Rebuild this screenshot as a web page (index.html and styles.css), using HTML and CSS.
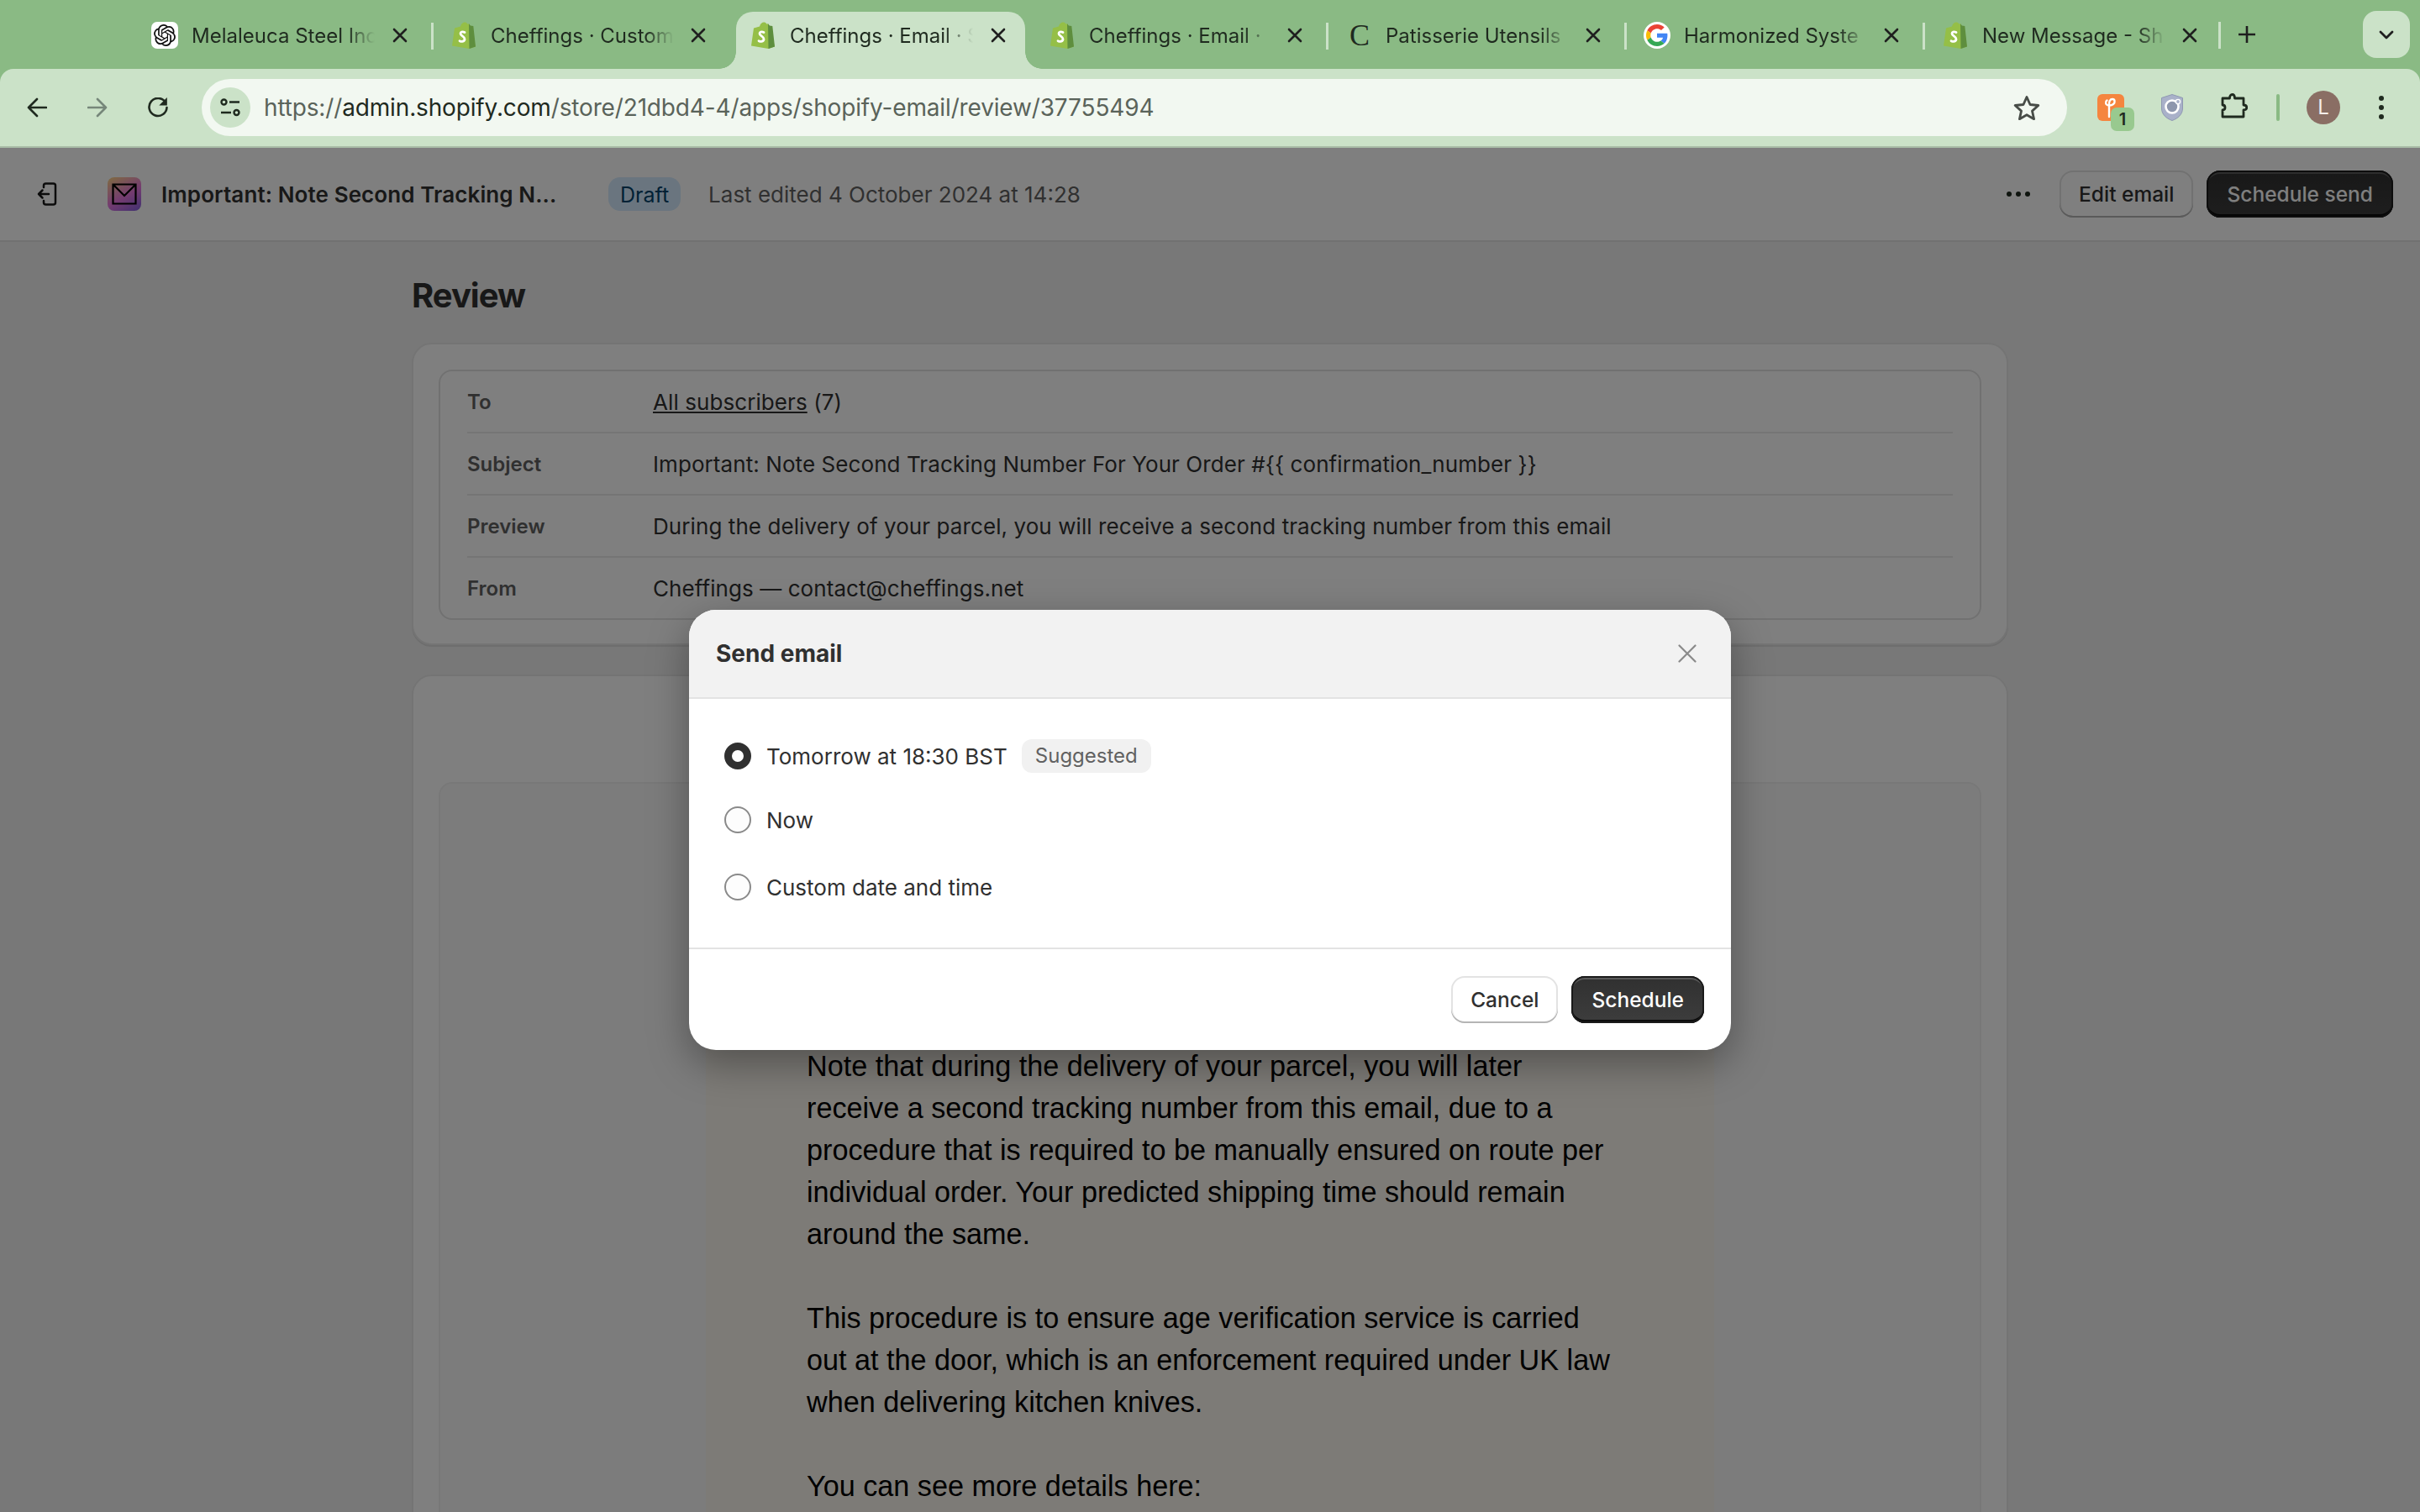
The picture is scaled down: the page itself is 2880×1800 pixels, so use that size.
FILE: index.html
```html
<!DOCTYPE html>
<html lang="en">
<head>
    <meta charset="UTF-8">
    <title>Cheffings · Email · Shopify</title>
    <link rel="stylesheet" href="styles.css">
</head>
<body>

    <!-- hidden defs so the shopify bag is only drawn once -->
    <svg class="defs" width="0" height="0">
        <symbol id="bag" viewBox="0 0 28 32">
            <path fill="#95bf47" d="M3 7.5 10 5.4C11 2 13 .6 15 .6c1.4 0 2.600.6 3.300 1.900l1.700-.3L22 5l6 24.500L20.500 32 0 28.500Z"/>
            <path fill="#5e8e3e" d="M20 2.200 21.800 4.600 25.300 5 28 29.500 20.500 32Z"/>
            <path fill="none" stroke="#fff" stroke-width="2.800" stroke-linecap="round" d="M15 12.500c-3-1.500-5-.2-5 1.600 0 2.600 5 3 5 6.400 0 2.800-3.200 3.600-6 2.200"/>
        </symbol>
        <symbol id="close" viewBox="0 0 18 18">
            <path fill="none" stroke="#1f1f1f" stroke-width="2.600" stroke-linecap="round" d="M2 2l14 14M16 2 2 16"/>
        </symbol>
    </svg>

    <div class="tabstrip">
        <div class="tab">
            <span class="favicon favicon-white">
                <svg width="26" height="26" viewBox="0 0 24 24"><path fill="#111" d="M22.2819 9.8211a5.9847 5.9847 0 0 0-.5157-4.9108 6.0462 6.0462 0 0 0-6.5098-2.9A6.0651 6.0651 0 0 0 4.9807 4.1818a5.9847 5.9847 0 0 0-3.9977 2.9 6.0462 6.0462 0 0 0 .7427 7.0966 5.98 5.98 0 0 0 .511 4.9107 6.051 6.051 0 0 0 6.5146 2.9001A5.9847 5.9847 0 0 0 13.2599 24a6.0557 6.0557 0 0 0 5.7718-4.2058 5.9894 5.9894 0 0 0 3.9977-2.9001 6.0557 6.0557 0 0 0-.7475-7.0729zm-9.022 12.6081a4.4755 4.4755 0 0 1-2.8764-1.0408l.1419-.0804 4.7783-2.7582a.7948.7948 0 0 0 .3927-.6813v-6.7369l2.02 1.1686a.071.071 0 0 1 .038.052v5.5826a4.504 4.504 0 0 1-4.4945 4.4944zm-9.6607-4.1254a4.4708 4.4708 0 0 1-.5346-3.0137l.142.0852 4.783 2.7582a.7712.7712 0 0 0 .7806 0l5.8428-3.3685v2.3324a.0804.0804 0 0 1-.0332.0615L9.74 19.9502a4.4992 4.4992 0 0 1-6.1408-1.6464zM2.3408 7.8956a4.485 4.485 0 0 1 2.3655-1.9728V11.6a.7664.7664 0 0 0 .3879.6765l5.8144 3.3543-2.0201 1.1685a.0757.0757 0 0 1-.071 0l-4.8303-2.7865A4.504 4.504 0 0 1 2.3408 7.872zm16.5963 3.8558L13.1038 8.364 15.1192 7.2a.0757.0757 0 0 1 .071 0l4.8303 2.7913a4.4944 4.4944 0 0 1-.6765 8.1042v-5.6772a.79.79 0 0 0-.407-.667zm2.0107-3.0231l-.142-.0852-4.7735-2.7818a.7759.7759 0 0 0-.7854 0L9.409 9.2297V6.8974a.0662.0662 0 0 1 .0284-.0615l4.8303-2.7866a4.4992 4.4992 0 0 1 6.6802 4.66zM8.3065 12.863l-2.02-1.1638a.0804.0804 0 0 1-.038-.0567V6.0742a4.4992 4.4992 0 0 1 7.3757-3.4537l-.142.0805L8.704 5.459a.7948.7948 0 0 0-.3927.6813zm1.0976-2.3654l2.602-1.4998 2.6069 1.4998v2.9994l-2.5974 1.5-2.6067-1.5Z"/></svg>
            </span>
            <span class="tab-label">Melaleuca Steel Inc</span>
            <svg class="tab-close"><use href="#close"/></svg>
        </div>
        <div class="tab tab-sep">
            <svg class="favicon"><use href="#bag"/></svg>
            <span class="tab-label">Cheffings · Custom</span>
            <svg class="tab-close"><use href="#close"/></svg>
        </div>
        <div class="tab tab-active">
            <svg class="favicon"><use href="#bag"/></svg>
            <span class="tab-label">Cheffings · Email · S</span>
            <svg class="tab-close"><use href="#close"/></svg>
        </div>
        <div class="tab tab-fourth">
            <svg class="favicon"><use href="#bag"/></svg>
            <span class="tab-label">Cheffings · Email ·</span>
            <svg class="tab-close"><use href="#close"/></svg>
        </div>
        <div class="tab tab-sep">
            <span class="favicon favicon-c">C</span>
            <span class="tab-label">Patisserie Utensils</span>
            <svg class="tab-close"><use href="#close"/></svg>
        </div>
        <div class="tab tab-sep tab-google">
            <span class="favicon favicon-white favicon-round">
                <svg width="26" height="26" viewBox="0 0 48 48">
                    <path fill="#EA4335" d="M24 9.500c3.540 0 6.710 1.220 9.210 3.600l6.850-6.850C35.900 2.380 30.470 0 24 0 14.620 0 6.510 5.380 2.560 13.220l7.980 6.190C12.430 13.720 17.740 9.500 24 9.500z"/>
                    <path fill="#4285F4" d="M46.980 24.550c0-1.570-.15-3.090-.38-4.550H24v9.020h12.940c-.58 2.960-2.260 5.480-4.780 7.180l7.730 6c4.510-4.180 7.090-10.360 7.090-17.650z"/>
                    <path fill="#FBBC05" d="M10.530 28.590c-.48-1.450-.76-2.990-.76-4.590s.27-3.140.76-4.590l-7.980-6.190C.92 16.460 0 20.120 0 24c0 3.880.92 7.540 2.560 10.780l7.970-6.190z"/>
                    <path fill="#34A853" d="M24 48c6.480 0 11.930-2.130 15.890-5.810l-7.730-6c-2.150 1.450-4.920 2.300-8.160 2.300-6.260 0-11.570-4.220-13.470-9.910l-7.980 6.190C6.510 42.620 14.620 48 24 48z"/>
                </svg>
            </span>
            <span class="tab-label">Harmonized Syste</span>
            <svg class="tab-close"><use href="#close"/></svg>
        </div>
        <div class="tab tab-sep">
            <svg class="favicon"><use href="#bag"/></svg>
            <span class="tab-label">New Message - Sh</span>
            <svg class="tab-close"><use href="#close"/></svg>
        </div>
        <div class="tab-sep-last"></div>
        <svg class="new-tab" width="20" height="20" viewBox="0 0 20 20"><path fill="none" stroke="#1f1f1f" stroke-width="2.600" d="M10 0v20M0 10h20"/></svg>
        <div class="tab-list">
            <svg width="18" height="11" viewBox="0 0 18 11"><path fill="none" stroke="#1f1f1f" stroke-width="2.800" stroke-linecap="round" stroke-linejoin="round" d="M2 2l7 7 7-7"/></svg>
        </div>
    </div>

    <div class="toolbar">
        <svg class="nav-icon" viewBox="0 0 24 24"><path fill="none" stroke="#1f2a1f" stroke-width="2.600" stroke-linecap="round" stroke-linejoin="round" d="M23 12H2M12 2 2 12l10 10"/></svg>
        <svg class="nav-icon" viewBox="0 0 24 24"><path fill="none" stroke="#76877a" stroke-width="2.600" stroke-linecap="round" stroke-linejoin="round" d="M1 12h21M12 2l10 10-10 10"/></svg>
        <svg class="nav-icon" viewBox="0 0 24 24"><path fill="none" stroke="#1f2a1f" stroke-width="2.600" stroke-linecap="round" d="M21 6A10.500 10.500 0 1 0 22.500 12"/><path fill="#1f2a1f" d="M22.800 0v9.500h-9.500Z"/></svg>

        <div class="omnibox">
            <div class="site-settings">
                <svg width="24" height="22" viewBox="0 0 24 22"><g fill="none" stroke="#1f2a1f" stroke-width="2.400"><circle cx="4.500" cy="4.500" r="3"/><path d="M11 4.500h12M1 17h12"/><circle cx="19.500" cy="17" r="3"/></g></svg>
            </div>
            <div class="url">https://<b>admin.shopify.com</b>/store/21dbd4-4/apps/shopify-email/review/37755494</div>
            <svg width="32" height="30" viewBox="0 0 32 30"><path fill="none" stroke="#474c47" stroke-width="2.800" stroke-linejoin="round" d="M16 2.500l4 9 9.800 1-7.300 6.600 2.100 9.600-8.600-5-8.600 5 2.100-9.600L2.200 12.500l9.800-1Z"/></svg>
        </div>

        <div class="ext ext-orange">
            <svg width="32" height="32" viewBox="0 0 32 32"><path fill="none" stroke="#fff" stroke-width="2.400" stroke-linecap="round" d="M14 27V12c0-3 1-6 4-6s3.500 4 1 6-6.500 2-8 .5-1-4 .5-5"/></svg>
            <span class="ext-badge">1</span>
        </div>
        <svg class="ext-shield" width="26" height="32" viewBox="0 0 26 32">
            <path fill="#a9b1c9" stroke="#8f98b2" d="M13 .5 25.500 4.500V17c0 7-5.500 12-12.500 14.500C6 29 .5 24 .5 17V4.500Z"/>
            <circle cx="13" cy="15" r="7.500" fill="#8e97ad" stroke="#fff" stroke-width="2.600"/>
            <circle cx="20" cy="9" r="2.600" fill="#a9b1c9" stroke="#fff" stroke-width="1.400"/>
        </svg>
        <svg class="ext-puzzle" width="32" height="32" viewBox="0 0 32 32"><path fill="none" stroke="#1f2a1f" stroke-width="2.800" stroke-linejoin="round" d="M2 7h8.500c0-6 6-6 6 0H27v8c5 0 5 6 0 6v8H2v-8c4 0 4-6 0-6Z"/></svg>
        <div class="toolbar-sep"></div>
        <div class="avatar">L</div>
        <div class="kebab"><i></i><i></i><i></i></div>
    </div>

    <div class="viewport">
        <div class="app-header">
            <svg class="exit-icon" width="24" height="28" viewBox="0 0 24 28"><path fill="none" stroke="#181818" stroke-width="2.500" stroke-linecap="round" stroke-linejoin="round" d="M8 6V4a2.500 2.500 0 0 1 2.500-2.500h9A2.500 2.500 0 0 1 22 4v20a2.500 2.500 0 0 1-2.500 2.500h-9A2.500 2.500 0 0 1 8 24v-2M14 14H2M6.500 9.500 2 14l4.500 4.500"/></svg>
            <div class="app-icon">
                <svg width="30" height="26" viewBox="0 0 30 26"><path fill="none" stroke="#000" stroke-width="2.200" d="M1.500 1.500h27v23h-27ZM1.500 1.500 15 15 28.500 1.500"/></svg>
            </div>
            <div class="app-title">Important: Note Second Tracking N...</div>
            <span class="draft">Draft</span>
            <span class="edited">Last edited 4 October 2024 at 14:28</span>
            <div class="dots"><i></i><i></i><i></i></div>
            <button class="btn">Edit email</button>
            <button class="btn btn-dark">Schedule send</button>
        </div>

        <div class="page">
            <h1>Review</h1>

            <div class="card">
                <div class="summary">
                    <div class="summary-row"><span class="summary-label">To</span><span class="summary-value"><a href="#">All subscribers</a> (7)</span></div>
                    <div class="summary-row"><span class="summary-label">Subject</span><span class="summary-value">Important: Note Second Tracking Number For Your Order #{{ confirmation_number }}</span></div>
                    <div class="summary-row"><span class="summary-label">Preview</span><span class="summary-value">During the delivery of your parcel, you will receive a second tracking number from this email</span></div>
                    <div class="summary-row"><span class="summary-label">From</span><span class="summary-value">Cheffings — contact@cheffings.net</span></div>
                </div>
            </div>

            <div class="card card-email">
                <div class="email-frame">
                    <div class="email-body">
                        <p>Note that during the delivery of your parcel, you will later receive a second tracking number from this email, due to a procedure that is required to be manually ensured on route per individual order. Your predicted shipping time should remain around the same.</p>
                        <p>This procedure is to ensure age verification service is carried out at the door, which is an enforcement required under UK law when delivering kitchen knives.</p>
                        <p>You can see more details here:</p>
                    </div>
                </div>
            </div>
        </div>

        <div class="overlay">
            <div class="modal">
                <div class="modal-head">
                    <span>Send email</span>
                    <svg width="22" height="22" viewBox="0 0 22 22"><path fill="none" stroke="#8a8a8a" stroke-width="2.200" stroke-linecap="round" d="M1.500 1.500l19 19M20.500 1.500l-19 19"/></svg>
                </div>
                <div class="modal-body">
                    <div class="radio-row">
                        <span class="radio radio-on"></span>
                        <span>Tomorrow at 18:30 BST</span>
                        <span class="suggested">Suggested</span>
                    </div>
                    <div class="radio-row">
                        <span class="radio"></span>
                        <span>Now</span>
                    </div>
                    <div class="radio-row">
                        <span class="radio"></span>
                        <span>Custom date and time</span>
                    </div>
                </div>
                <div class="modal-foot">
                    <button class="btn btn-white">Cancel</button>
                    <button class="btn btn-dark">Schedule</button>
                </div>
            </div>
        </div>
    </div>

</body>
</html>
```

FILE: styles.css
```css
* {
    box-sizing: border-box;
}
html, body {
    height: 100%;
    margin: 0;
    overflow: hidden;
}
body {
    display: flex;
    flex-direction: column;
    font-family: 'Inter', 'Liberation Sans', sans-serif;
    font-size: 26px;
    color: #303030;
    background-color: #8aba84;
}
.defs {
    position: absolute;
}

/* tab strip */
.tabstrip {
    display: flex;
    align-items: center;
    height: 82px;
    padding-left: 160px;
    flex-shrink: 0;
}
.tab {
    position: relative;
    display: flex;
    align-items: center;
    width: 355px;
    height: 82px;
    padding-left: 23px;
    padding-top: 2px;
    font-size: 24px;
    color: #1f2a1f;
}
.tab:first-child {
    padding-left: 20px;
}
.tab-fourth {
    padding-left: 25px;
}
.tab-google {
    padding-left: 21px;
}
.tab-sep::before, .tab-sep-last {
    content: "";
    width: 3px;
    height: 32px;
    background: #cbe2c8;
}
.tab-sep::before {
    position: absolute;
    left: -2px;
    top: 27px;
}
.tab-sep-last {
    margin: 2px 21px 0 -5px;
    flex-shrink: 0;
}
.tab-active {
    height: 68px;
    margin: 14px 5px 0 6px;
    padding: 0 0 12px 18px;
    width: 344px;
    background: #cbe2c8;
    border-radius: 20px 20px 0 0;
}
.tab-active::before, .tab-active::after {
    content: "";
    position: absolute;
    bottom: 0;
    width: 20px;
    height: 20px;
}
.tab-active::before {
    left: -20px;
    background: radial-gradient(circle at 0 0, transparent 19.500px, #cbe2c8 20px);
}
.tab-active::after {
    right: -20px;
    background: radial-gradient(circle at 100% 0, transparent 19.500px, #cbe2c8 20px);
}
.favicon {
    width: 28px;
    height: 32px;
    flex-shrink: 0;
    margin-right: 18px;
}
.favicon-white {
    display: flex;
    align-items: center;
    justify-content: center;
    width: 32px;
    margin-right: 16px;
    background: #fff;
    border-radius: 7px;
}
.favicon-round {
    border-radius: 50%;
}
.favicon-c {
    font-family: 'Liberation Serif', serif;
    font-size: 36px;
    line-height: 32px;
    width: 24px;
    margin-right: 19px;
    margin-left: 3px;
    color: #1f2a1f;
}
.tab-label {
    white-space: nowrap;
    -webkit-mask-image: linear-gradient(to right, #000 184px, transparent 218px);
    mask-image: linear-gradient(to right, #000 184px, transparent 218px);
}
.tab-close {
    position: absolute;
    left: 307px;
    top: 33px;
    width: 18px;
    height: 18px;
}
.tab-active .tab-close {
    left: 303px;
    top: 19px;
}
.new-tab {
    flex-shrink: 0;
}
.tab-list {
    display: flex;
    align-items: center;
    justify-content: center;
    width: 56px;
    height: 56px;
    margin-left: auto;
    margin-right: 12px;
    background: #cbe2c8;
    border-radius: 16px;
    flex-shrink: 0;
}

/* toolbar */
.toolbar {
    display: flex;
    align-items: center;
    height: 94px;
    padding-left: 32px;
    background: #cbe2c8;
    border-bottom: 2px solid #a9bda7;
    border-radius: 16px 16px 0 0;
    flex-shrink: 0;
}
.nav-icon {
    width: 24px;
    height: 24px;
    margin-right: 48px;
}
.nav-icon:nth-child(3) {
    margin-right: 40px;
}
.omnibox {
    display: flex;
    align-items: center;
    width: 2220px;
    height: 68px;
    padding: 0 32px 0 10px;
    background: #f2f8f1;
    border-radius: 34px;
}
.site-settings {
    display: flex;
    align-items: center;
    justify-content: center;
    width: 48px;
    height: 48px;
    margin-right: 16px;
    background: #cbe2c8;
    border-radius: 50%;
}
.url {
    flex: 1;
    font-size: 28px;
    letter-spacing: -0.15px;
    color: #5a635a;
}
.url b {
    font-weight: 400;
    color: #1f2a1f;
}
.ext {
    position: relative;
}
.ext-orange {
    width: 32px;
    height: 32px;
    margin-left: 36px;
    background: #f5853f;
    border-radius: 6px;
}
.ext-badge {
    position: absolute;
    left: 16px;
    top: 16px;
    width: 28px;
    height: 28px;
    font-size: 20px;
    font-weight: 600;
    line-height: 28px;
    text-align: center;
    color: #1f2a1f;
    background: #98c98f;
    border-radius: 7px;
}
.ext-shield {
    margin-left: 44px;
}
.ext-puzzle {
    margin-left: 45px;
    margin-top: -4px;
}
.toolbar-sep {
    width: 4px;
    height: 32px;
    margin-left: 34px;
    background: #8aba84;
    border-radius: 2px;
}
.avatar {
    width: 40px;
    height: 40px;
    margin-left: 32px;
    font-size: 24px;
    line-height: 40px;
    text-align: center;
    color: #f4eeeb;
    background: #8a6e64;
    border-radius: 50%;
}
.kebab {
    display: flex;
    flex-direction: column;
    gap: 5px;
    margin-left: 46px;
}
.kebab i, .dots i {
    display: block;
    width: 6px;
    height: 6px;
    background: #1f2a1f;
    border-radius: 50%;
}

/* dimmed page */
.viewport {
    position: relative;
    flex: 1;
    overflow: hidden;
    background: #f1f1f1;
}
.app-header {
    display: flex;
    align-items: center;
    height: 112px;
    padding: 0 32px 0 44px;
    background: #fff;
    border-bottom: 2px solid #e3e3e3;
}
.exit-icon {
    margin-right: 60px;
}
.app-icon {
    display: flex;
    align-items: center;
    justify-content: center;
    width: 40px;
    height: 40px;
    margin-right: 24px;
    background: linear-gradient(150deg, #ffd880 0%, #e878e0 55%, #8060e0 100%);
    border-radius: 8px;
}
.app-title {
    width: 468px;
    font-weight: 600;
    letter-spacing: 0.1px;
    white-space: nowrap;
}
.draft {
    height: 40px;
    margin-left: 64px;
    padding: 0 14px;
    font-size: 25px;
    line-height: 42px;
    color: #00426a;
    background: #d5ebff;
    border-radius: 14px;
}
.edited {
    margin-left: 33px;
    color: #616161;
}
.dots {
    display: flex;
    gap: 5px;
    margin-left: auto;
    margin-right: 35px;
}
.btn {
    height: 56px;
    padding: 0 23px;
    font-family: inherit;
    font-size: 24.500px;
    font-weight: 550;
    color: #303030;
    background: #fff;
    border: none;
    border-radius: 16px;
    box-shadow: inset 0 -2px 0 #b5b5b5, inset 0 0 0 2px #e3e3e3;
}
.btn-dark {
    padding: 0 24px;
    margin-left: 16px;
    color: #fff;
    background: linear-gradient(#303030, #3d3d3d);
    box-shadow: inset 0 0 0 2px #1a1a1a, inset 0 4px 0 #5a5a5a, inset 0 -4px 0 #0c0c0c;
}
.page {
    width: 1900px;
    margin: 0 auto;
    padding-top: 40px;
}
h1 {
    margin: 0 0 32px;
    font-size: 40px;
    font-weight: 650;
    line-height: 48px;
    letter-spacing: -1px;
}
.card {
    padding: 30px 30px 28px;
    margin-bottom: 35px;
    background: #fff;
    border: 2px solid #e9e9e9;
    border-radius: 24px;
    box-shadow: 0 2px 0 #dcdcdc;
}
.summary {
    padding: 0 32px;
    border: 2px solid #e3e3e3;
    border-radius: 16px;
}
.summary-row {
    display: flex;
    align-items: center;
    height: 74px;
    border-bottom: 2px solid #ebebeb;
}
.summary-row:last-child {
    height: 72px;
    border-bottom: none;
}
.summary-label {
    width: 221px;
    font-size: 24px;
    font-weight: 600;
    color: #616161;
}
.summary-value {
    letter-spacing: 0.08px;
}
.summary-row a {
    color: inherit;
}
.card-email {
    padding: 126px 30px 0;
    margin: 0;
}
.email-frame {
    display: flex;
    justify-content: center;
    padding-top: 28px;
    background: #f9f9f9;
    border: 2px solid #f1f1f1;
    border-radius: 16px;
}
.email-body {
    width: 1200px;
    padding: 283px 120px 0;
    font-family: 'Liberation Sans', Arial, sans-serif;
    font-size: 34.200px;
    line-height: 50px;
    color: #000;
    background: #fbf6ee;
}
.email-body p {
    margin: 0 0 50px;
}

/* modal */
.overlay {
    position: absolute;
    inset: 0;
    display: flex;
    align-items: center;
    justify-content: center;
    background: rgba(0, 0, 0, 0.5);
}
.modal {
    width: 1240px;
    background: #fff;
    border-radius: 32px;
    overflow: hidden;
    box-shadow: 0 16px 48px rgba(0, 0, 0, 0.35);
}
.modal-head {
    display: flex;
    align-items: center;
    justify-content: space-between;
    height: 106px;
    padding: 0 41px 0 32px;
    font-size: 28px;
    font-weight: 650;
    background: #f2f2f2;
    border-bottom: 2px solid #e3e3e3;
}
.modal-body {
    padding: 48px 42px 0;
    height: 296px;
}
.radio-row {
    display: flex;
    align-items: center;
    height: 40px;
    gap: 18px;
    margin-bottom: 36px;
}
.radio-row:nth-child(2) {
    margin-bottom: 40px;
}
.radio {
    width: 32px;
    height: 32px;
    background: #fdfdfd;
    border: 2px solid #8a8a8a;
    border-radius: 50%;
}
.radio-on {
    border: 9px solid #303030;
    background: #fff;
}
.suggested {
    height: 40px;
    margin-left: -1px;
    padding: 0 16px;
    font-size: 24px;
    line-height: 40px;
    color: #616161;
    background: #f1f1f1;
    border-radius: 12px;
}
.modal-foot {
    display: flex;
    justify-content: flex-end;
    padding: 32px;
    border-top: 2px solid #e3e3e3;
}
```
